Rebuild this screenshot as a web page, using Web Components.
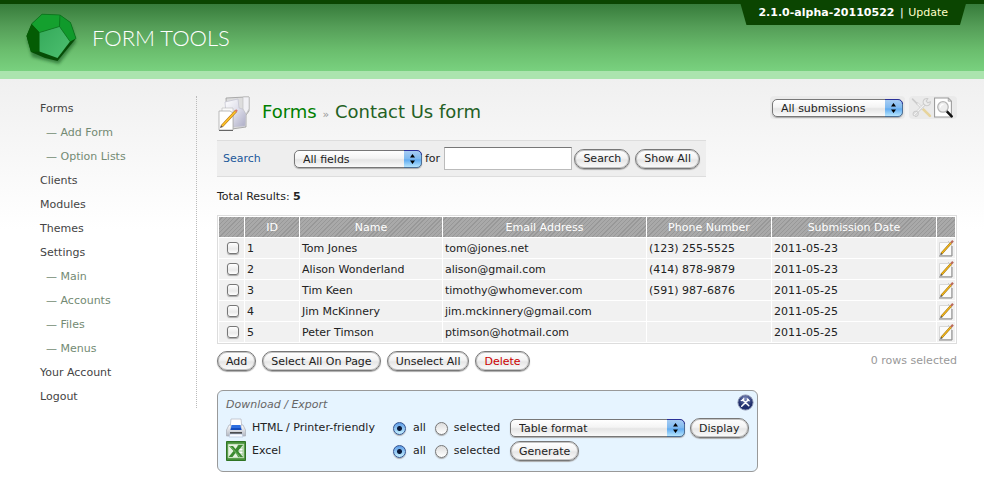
<!DOCTYPE html>
<html lang="en">
<head>
<meta charset="utf-8">
<title>Form Tools</title>
<style>
html { background: #fff; }
body { margin: 0; font: 11px/16px "DejaVu Sans", Verdana, sans-serif; color: #222; }
</style>
</head>
<body>
<ft-app></ft-app>
<script>
const define = (name, html, setup) => {
  const template = document.createElement('template');
  template.innerHTML = html;
  customElements.define(name, class extends HTMLElement {
    constructor() {
      super();
      this.attachShadow({ mode: 'open' }).append(template.content.cloneNode(true));
    }
    connectedCallback() {
      if (setup && !this.ready) { this.ready = true; setup(this, this.shadowRoot); }
    }
  });
};

const icons = {
  logo: ['0 0 50 50', `<defs><linearGradient id="f" x2="1" y2="1"><stop stop-color="#35a95a"/><stop offset="1" stop-color="#4dc070"/></linearGradient><filter id="b" x="-20%" y="-20%" width="140%" height="150%"><feGaussianBlur stdDeviation="1.6"/></filter></defs>
    <path d="M1 24 6 11 17 2 35 3 46 11 50 26 33 48 6 41z" fill="#155a20" opacity=".6" filter="url(#b)" transform="translate(0 3)"/>
    <path d="M0.500 23 5.500 11 16 1.200 34 2 44.500 9.500 50 25.500 31.500 48 19 45 5 39z" fill="#064d06"/>
    <path d="M5.500 11 16 1.200 34 2 33.500 13.500 13.500 19.500z" fill="#14a02e"/><path d="M34 2 44.500 9.500 50 25.500 44 28.500 33.500 13.500z" fill="#109a2b"/>
    <path d="M5.500 11 13.500 19.500 13.500 38.500 5 39 .5 23z" fill="#045c04"/><path d="M13.500 19.500 33.500 13.500 44 28.500 31.500 45 13.500 38.500z" fill="url(#f)"/>
    <path d="M5.500 11 16 1.200 34 2 44.500 9.500 50 25.500M34 2l-.5 11.500 10.500 15M33.500 13.500l-20 6" fill="none" stroke="#08721b" stroke-width=".7"/>`],
  forms: ['0 0 34 36', `<defs><linearGradient id="g" x2="1" y2="1"><stop stop-color="#fff"/><stop offset=".5" stop-color="#dedeea"/><stop offset="1" stop-color="#aaaac4"/></linearGradient></defs>
    <path d="M9 2 28 1 32 1V15L29 19V31L15 33 10 30z" fill="#ddd" stroke="#999" stroke-width=".8"/><path d="M8 6 21 3 22 12 29 14 28 30 10 31z" fill="url(#g)" stroke="#c1c1d0" stroke-width=".7"/>
    <path d="M26 1h6v12l-3 5-3-5z" fill="#f1f1f5" stroke="#bbb" stroke-width=".6"/>
    <path d="M5 12h11v21H5z" fill="#fafafa" stroke="#bbb" stroke-width=".6"/><path d="M2 15h11l3 2v17H2z" fill="#fff" stroke="#aaa" stroke-width=".8"/><path d="M2 34.500h14" stroke="#666"/>
    <path d="M5 30 19 15" stroke="#b97914" stroke-width="2.600"/><path d="M5 30 19 15" stroke="#ffc52a" stroke-width="1.6"/><path d="m18.500 15.500 1.500-1.500" stroke="#d47a6a" stroke-width="2.4"/><path d="m3 32 1-3 2 2z" fill="#654"/>`],
  tools: ['0 0 20 20', `<g fill="none" stroke-linecap="round" opacity=".75"><path d="m6 6 5 5" stroke="#c4c4c4" stroke-width="2.400"/><path d="m6 6 5 5" stroke="#f4f4f4" stroke-width="1.200"/><path d="m12 12 6 6" stroke="#e6cd83" stroke-width="2.600"/><path d="m1.500 2 4 4" stroke="#c2c2c2" stroke-width="1.6"/><path d="m3 17 10-10" stroke="#bdbdbd" stroke-width="2.6"/><path d="m3 17 10-10" stroke="#f6f6f6" stroke-width="1.3"/><path d="M16 1.500a3.500 3.500 0 1 0 2.500 3l-2.500 1-1.500-1.500z" fill="#eee" stroke="#c2c2c2"/><path d="M4 18.500a2.500 2.500 0 1 0-2-2" stroke="#c2c2c2"/></g>`],
  search: ['0 0 20 20', `<path d="M1.5 1h13l3 3v15h-16z" fill="#fff" stroke="#999"/><path d="M14.500 1v3h3z" fill="#ddd" stroke="#999" stroke-width=".7"/><path d="m13 13.500 4.800 5" stroke="#111" stroke-width="2.400" stroke-linecap="round"/><circle cx="9.500" cy="9.500" r="5" fill="#eee" stroke="#b5b5b5" stroke-width="1.200"/><path d="M7 10a3 3 0 0 1 3-3" fill="none" stroke="#fff"/>`],
  edit: ['0 0 16 17', `<path d="M1.500 2.500h12v13h-12z" fill="#fbfbfb" stroke="#d8d8d8"/><path d="M1 16h13V6" fill="none" stroke="#888"/><path d="M10 1l3 3" stroke="#ccc"/><path d="m3.500 13.500 9.500-10.500" stroke="#8d6508" stroke-width="2.100"/><path d="m3.500 13.500 9.500-10.500" stroke="#f5b81e" stroke-width="1.200"/><path d="m13 3 2-2.200" stroke="#b9695a" stroke-width="2.200"/><path d="m2.300 15 .5-2.200 1.700 1.500z" fill="#333"/>`],
  printer: ['0 0 20 20', `<defs><linearGradient id="p" y2="1" x2="0"><stop stop-color="#fff"/><stop offset="1" stop-color="#b2b7c1"/></linearGradient></defs><path d="M5 1h10l1 9H4z" fill="#fff" stroke="#b9bdc6" stroke-width=".8"/><path d="M3 7h2v3h10V7h2l2.500 5v6h-19v-6z" fill="url(#p)" stroke="#a9adb7" stroke-width=".7"/><path d="M5.500 7h9l1 5h-11z" fill="#2f6fe0"/><path d="M5 10h10l.5 2h-11z" fill="#164dbd"/><path d="M4 15h12" stroke="#222" stroke-width="1.500"/><path d="m4 16-1 3h14l-1-3z" fill="#f9fbff" stroke="#b6c5dd" stroke-width=".7"/>`],
  excel: ['0 0 20 20', `<path d="M.5.5h19v19H.5z" fill="#47903a" stroke="#2f7424"/><path d="M2 3h16v14H2z" fill="#e7f3e2" stroke="#8fbd82" stroke-width=".6"/><path d="M12 4h5v12h-5zM12 7h5M12 10h5M12 13h5" fill="#fff" stroke="#8cbe80" stroke-width=".8"/><path d="M3 5h4l2.500 3L12.500 4H17l-5 6 5 6h-4.500l-3-4-3 4H2.500l5-6z" fill="#3c8a31"/><path d="m4 5 10 11" stroke="#77b968"/>`],
  config: ['0 0 18 18', `<defs><radialGradient id="c" cy=".25"><stop stop-color="#7f8cbd"/><stop offset="1" stop-color="#202e6c"/></radialGradient></defs><circle cx="9" cy="9" r="8" fill="url(#c)" stroke="#8891ad"/><path d="m6 6 6.500 6.500M5 13l7-7" stroke="#fff" stroke-width="1.600" stroke-linecap="round"/><path d="M4 6.500A2 2 0 0 0 7 4M11 4.500a2 2 0 0 0 2.500 2.500" fill="none" stroke="#fff" stroke-width="1.300"/>`]
};

define('ft-icon', `<style>:host{display:block;flex:none;width:20px;height:20px}svg{display:block;width:100%;height:100%;overflow:visible}</style>`,
  (host, root) => {
    const [box, art] = icons[host.getAttribute('name')];
    root.innerHTML += `<svg viewBox="${box}" aria-hidden="true">${art}</svg>`;
  });

define('ft-button', `<style>
:host{display:block;flex:none}
button{display:block;box-sizing:border-box;height:20px;margin:0;padding:1px 8px 0;border:1px solid #777;border-radius:10px;font:inherit;line-height:16px;color:inherit;white-space:nowrap;
background:linear-gradient(#fff,#f3f3f3 45%,#e6e6e6 55%,#fcfcfc);box-shadow:inset 0 0 0 1px #c4c4c4,0 1px 1px #aaa}
</style><button type="button"><slot></slot></button>`);

define('ft-select', `<style>
:host{display:grid;min-width:0;grid-template-columns:minmax(0,1fr) 18px;height:18px;border-radius:5px;box-shadow:0 1px 1px #aaa}
select{grid-area:1/1/2/3;box-sizing:border-box;appearance:none;width:100%;height:18px;margin:0;padding:1px 20px 0 8px;border:1px solid #777;border-radius:5px;font:inherit;line-height:16px;color:inherit;background:linear-gradient(#fff,#f4f4f4 45%,#e5e5e5 55%,#fafafa)}
svg{grid-area:1/2;display:block;width:18px;height:18px;pointer-events:none}
</style><select></select>
<svg viewBox="0 0 18 18" aria-hidden="true"><defs><linearGradient id="s" y2="1" x2="0"><stop stop-color="#a9cdf2"/><stop offset=".5" stop-color="#7db9f1"/><stop offset=".55" stop-color="#5faaf0"/><stop offset="1" stop-color="#bdeaff"/></linearGradient></defs><path d="M0 .5h13a4.500 4.500 0 0 1 4.500 4.500v8a4.500 4.500 0 0 1-4.500 4.500H0z" fill="url(#s)"/><path d="M0 .5h13a4.500 4.500 0 0 1 4.500 4.500" fill="none" stroke="#2a3199"/><path d="M17.500 5v8a4.500 4.500 0 0 1-4.500 4.500H0" fill="none" stroke="#4c6f96"/><path d="M8.500 4l2.500 3.500H6zM8.500 14l2.500-3.500H6z" fill="#000"/></svg>`,
  (host, root) => {
    const s = root.querySelector('select');
    s.setAttribute('aria-label', host.getAttribute('label'));
    s.add(new Option(host.getAttribute('value')));
  });

define('ft-header', `<style>
:host{display:flex;justify-content:space-between;align-items:flex-start;box-sizing:border-box;height:79px;padding:0 17px 0 26px;border-bottom:8px solid #abe4ae;background:linear-gradient(#0b4501 4px,#377c3b 4px,#559e58 27px,#6abd6d 50px,#79d17f)}
.brand{display:flex;gap:16px;margin-top:13px;color:#fff;text-decoration:none;font:300 22px/50px Lato,sans-serif}
.brand ft-icon{width:50px;height:50px}
.version{padding:5px 19px 4px;background:#0b4501;color:#fff;clip-path:polygon(0 0,100% 0,calc(100% - 7px) 100%,7px 100%)}
b{margin-right:2px}
.version a{margin-left:1px;color:#ffffc8;text-decoration:none}
</style>
<a class="brand" href="#"><ft-icon name="logo"></ft-icon><span>FORM TOOLS</span></a>
<div class="version"><b>2.1.0-alpha-20110522</b> | <a href="#">Update</a></div>`);

define('ft-nav', `<style>
:host{display:block;flex:none;box-sizing:border-box;width:157px;border-right:1px dotted #bbb}
ul{list-style:none;margin:0;padding:0}
a{display:block;box-sizing:border-box;height:24px;padding-top:2px;line-height:22px;color:#444;text-decoration:none}
.sub{padding-left:6px;color:#738a73}
</style><nav><ul></ul></nav>`,
  (host, root) => {
    root.querySelector('ul').innerHTML = ['Forms', '— Add Form', '— Option Lists', 'Clients', 'Modules', 'Themes', 'Settings', '— Main', '— Accounts', '— Files', '— Menus', 'Your Account', 'Logout']
      .map(t => `<li><a href="#"${t[0] === '—' ? ' class="sub"' : ''}>${t}</a></li>`).join('');
  });

define('ft-title', `<style>
:host{display:flex;align-items:flex-start;height:44px}
ft-icon.big{width:34px;height:36px}
h1{flex:1;margin:4px 0 0 11px;font-size:18px;line-height:24px;font-weight:400;color:#246124}
h1 a{color:#008000;text-decoration:none}
h1 span{font-size:11px;color:#999}
.view,.tools{display:flex;align-items:center;height:23px;background:#eaeaea;border-radius:4px}
.view{padding:0 2px}
ft-select{width:131px}
.tools{gap:1px;margin-left:4px;padding:0 3px 0 2px}
.tools ft-icon{width:21px;height:21px}
</style>
<ft-icon class="big" name="forms"></ft-icon>
<h1><a href="#">Forms</a> <span>»</span> Contact Us form</h1>
<div class="view"><ft-select label="View" value="All submissions"></ft-select></div>
<div class="tools"><a href="#" aria-label="Edit form"><ft-icon name="tools"></ft-icon></a><a href="#" aria-label="View form"><ft-icon name="search"></ft-icon></a></div>`);

define('ft-search', `<style>
:host{display:flex;align-items:center;box-sizing:border-box;width:489px;max-width:100%;height:37px;padding:0 6px;background:#eee;border:solid #ddd;border-width:1px 0}
.name{width:71px;color:#21589a}
ft-select{width:128px}
.for{padding:0 4px 0 3px}
input{flex:1;min-width:0;box-sizing:border-box;height:23px;margin:0 2px 0 0;padding:2px 4px;border:1px solid #bbb;border-top-color:#777;font:inherit;background:#fff}
ft-button + ft-button{margin-left:5px}
</style>
<span class="name">Search</span><ft-select label="Search field" value="All fields"></ft-select><label class="for" for="q">for</label><input id="q" type="text"><ft-button>Search</ft-button><ft-button>Show All</ft-button>`);

define('ft-table', `<style>
:host{display:block}
table{width:100%;table-layout:fixed;border:1px solid #ddd;border-collapse:separate;border-spacing:1px;background:#fff}
th,td{box-sizing:border-box;height:20px;padding:2px 2px 0;line-height:18px;background:#f1f1f1;text-align:left;white-space:nowrap}
th{font-weight:400;color:#fff;text-align:center;background:repeating-linear-gradient(135deg,#a9a9a9 0 2px,#989898 2px 3px)}
th:nth-child(1){width:25px}th:nth-child(2){width:54px}th:nth-child(3){width:142px}th:nth-child(5){width:124px}th:nth-child(6){width:164px}th:nth-child(7){width:18px}
td:first-child,td:last-child{padding:0}
td:last-child a{display:block;width:16px;margin:auto}
td ft-icon{width:16px;height:17px}
input{display:block;box-sizing:border-box;appearance:none;width:12px;height:12px;margin:0 0 0 8px;border:1px solid #777;border-radius:3px;background:linear-gradient(#fff,#eaeaea 60%,#fff);box-shadow:0 1px 1px #aaa}
</style>
<table><thead><tr><th></th><th>ID</th><th>Name</th><th>Email Address</th><th>Phone Number</th><th>Submission Date</th><th></th></tr></thead><tbody></tbody></table>`,
  (host, root) => {
    root.querySelector('tbody').innerHTML = [
      ['1', 'Tom Jones', 'tom@jones.net', '(123) 255-5525', '2011-05-23'],
      ['2', 'Alison Wonderland', 'alison@gmail.com', '(414) 878-9879', '2011-05-23'],
      ['3', 'Tim Keen', 'timothy@whomever.com', '(591) 987-6876', '2011-05-25'],
      ['4', 'Jim McKinnery', 'jim.mckinnery@gmail.com', '', '2011-05-25'],
      ['5', 'Peter Timson', 'ptimson@hotmail.com', '', '2011-05-25']
    ].map(r => `<tr><td><input type="checkbox" aria-label="Select ${r[1]}"></td>${r.map(c => `<td>${c}</td>`).join('')}<td><a href="#" aria-label="Edit ${r[1]}"><ft-icon name="edit"></ft-icon></a></td></tr>`).join('');
  });

define('ft-radios', `<style>
:host{display:flex}
label{display:flex;align-items:center;gap:7px}
label + label{margin-left:9px;gap:6px}
input{appearance:none;box-sizing:border-box;width:13px;height:13px;margin:0;border:1px solid #777;border-radius:50%;background:linear-gradient(#ddd,#fff);box-shadow:0 1px 1px #aaa}
input:checked{border-color:#34538f;background:radial-gradient(circle,#0a1a3a 0 2px,transparent 3px),linear-gradient(#5c9be6,#c5f0ff)}
</style><label><input type="radio" name="rows" checked>all</label><label><input type="radio" name="rows">selected</label>`);

define('ft-export', `<style>
:host{display:block;box-sizing:border-box;width:541px;max-width:100%;padding:3px 3px 10px 8px;border:1px solid #999;border-radius:6px;background:#e6f4ff}
.head{display:flex;justify-content:space-between;align-items:flex-start;height:24px}
em{padding-top:3px;color:#666}
.head ft-icon{width:17px;height:17px}
.rows{display:grid;grid-template-columns:20px 135px 107px 1fr;column-gap:6px;row-gap:3px;align-items:center}
.act{display:flex;gap:5px;align-items:center;padding-left:4px}
ft-select{width:175px}
</style>
<div class="head"><em>Download / Export</em><a href="#" aria-label="Configure"><ft-icon name="config"></ft-icon></a></div>
<div class="rows">
<ft-icon name="printer"></ft-icon><span>HTML / Printer-friendly</span><ft-radios></ft-radios><div class="act"><ft-select label="Format" value="Table format"></ft-select><ft-button>Display</ft-button></div>
<ft-icon name="excel"></ft-icon><span>Excel</span><ft-radios></ft-radios><div class="act"><ft-button>Generate</ft-button></div>
</div>`);

define('ft-app', `<style>
:host{display:block}
.page{display:flex;align-items:flex-start;gap:20px;padding:17px 27px 0 40px;background:linear-gradient(#f0f0f0,#fff 150px)}
main{flex:1;min-width:0}
.total{margin:12px 0 10px}
.actions{display:flex;align-items:center;gap:6px;margin:7px 0 19px}
.delete{color:#c00}
.count{margin-left:auto;color:#999}
</style>
<ft-header></ft-header>
<div class="page"><ft-nav></ft-nav>
<main>
<ft-title></ft-title>
<ft-search></ft-search>
<div class="total">Total Results: <b>5</b></div>
<ft-table></ft-table>
<div class="actions"><ft-button>Add</ft-button><ft-button>Select All On Page</ft-button><ft-button>Unselect All</ft-button><ft-button class="delete">Delete</ft-button><span class="count">0 rows selected</span></div>
<ft-export></ft-export>
</main></div>`);
</script>
</body>
</html>
